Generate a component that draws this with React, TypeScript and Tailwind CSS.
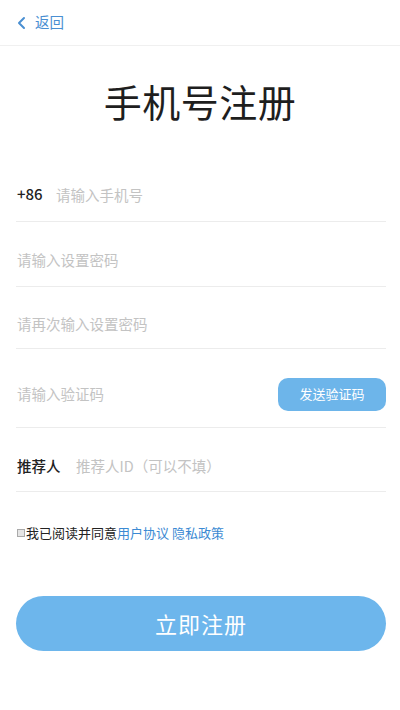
import React from "react";

const font = { fontFamily: '"Noto Sans CJK SC", "Noto Sans", sans-serif' };

function Row({ h, children }: { h: string; children: React.ReactNode }) {
  return (
    <div className={`flex items-center border-b border-[#ececec] pt-[12px] ${h}`}>{children}</div>
  );
}

export default function App() {
  return (
    <div className="w-[400px] h-[710px] bg-white text-[#222] overflow-hidden" style={font}>
      <div className="h-[46px] flex items-center pl-[16px] border-b border-[#f0f0f0]">
        <svg width="12" height="14" viewBox="0 0 12 14" className="mr-[7px]">
          <path d="M8 2 L3 7 L8 12" fill="none" stroke="#4a8fd2" strokeWidth="2" strokeLinecap="round" strokeLinejoin="round" />
        </svg>
        <span className="text-[14.5px] text-[#4a8fd2] leading-none">返回</span>
      </div>
      <div className="h-[108px] flex items-center justify-center pt-[2px]">
        <span className="text-[38px] leading-none tracking-[0.5px] text-[#1e1e1e]">手机号注册</span>
      </div>
      <div className="pl-[16px] pr-[14px]">
        <div className="flex items-center border-b border-[#ececec] h-[68px] pt-[14px]">
          <span className="text-[15px] text-[#222] w-[40px] pl-[1px] font-medium">+86</span>
          <span className="text-[14.5px] text-[#c3c3c3]">请输入手机号</span>
        </div>
        <Row h="h-[65px]">
          <span className="text-[14.5px] text-[#c3c3c3] pl-[1px]">请输入设置密码</span>
        </Row>
        <Row h="h-[62px]">
          <span className="text-[14.5px] text-[#c3c3c3] pl-[1px]">请再次输入设置密码</span>
        </Row>
        <Row h="h-[79px]">
          <span className="text-[14.5px] text-[#c3c3c3] pl-[1px] flex-1">请输入验证码</span>
          <div className="w-[108px] h-[33px] rounded-[10px] bg-[#6db5ea] flex items-center justify-center">
            <span className="text-[13px] text-white">发送验证码</span>
          </div>
        </Row>
        <Row h="h-[64px]">
          <span className="text-[14.5px] text-[#222] w-[60px] pl-[1px] font-medium">推荐人</span>
          <span className="text-[14.5px] text-[#c3c3c3]">推荐人ID（可以不填）</span>
        </Row>
        <div className="flex items-center h-[82px]">
          <span className="w-[8px] h-[8px] border border-[#aaa] bg-[#e5e5e5] mr-[1px] ml-[1px]"></span>
          <span className="text-[13px] text-[#222]">我已阅读并同意</span>
          <span className="text-[13px] text-[#3b8ad3]">用户协议 隐私政策</span>
        </div>
        <div className="mt-[22px] h-[55px] rounded-full bg-[#6db6ec] flex items-center justify-center">
          <span className="text-[22px] text-white tracking-[1px]">立即注册</span>
        </div>
      </div>
    </div>
  );
}
